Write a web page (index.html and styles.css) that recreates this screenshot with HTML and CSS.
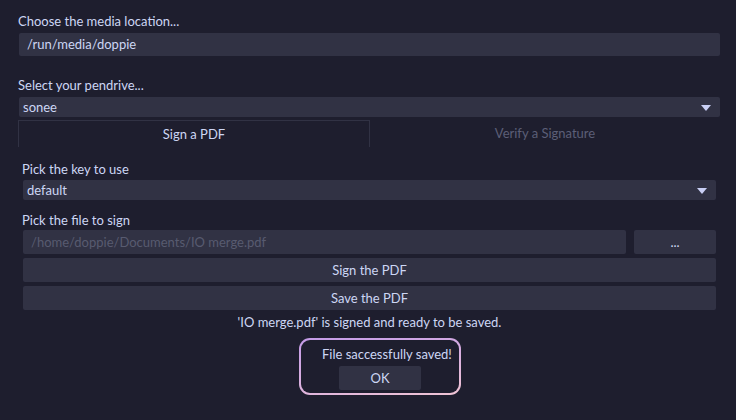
FILE: index.html
```html
<!DOCTYPE html>
<html>
<head>
<meta charset="utf-8">
<link rel="stylesheet" href="styles.css">
</head>
<body>
<div class="app">
  <div class="label l1">Choose the media location...</div>
  <div class="input path">/run/media/doppie</div>
  <div class="label l2">Select your pendrive...</div>
  <div class="select top">sonee<span class="arrow"></span></div>
  <div class="tabs">
    <div class="tab active">Sign a PDF</div>
    <div class="tab">Verify a Signature</div>
  </div>
  <div class="panel">
    <div class="label l3">Pick the key to use</div>
    <div class="select key">default<span class="arrow"></span></div>
    <div class="label l4">Pick the file to sign</div>
    <div class="filerow">
      <div class="input file">/home/doppie/Documents/IO merge.pdf</div>
      <div class="btn browse">...</div>
    </div>
    <div class="btn wide sign">Sign the PDF</div>
    <div class="btn wide save">Save the PDF</div>
    <div class="status">'IO merge.pdf' is signed and ready to be saved.</div>
    <div class="popup">
      <div class="popup-inner">
        <div class="msg">File saccessfully saved!</div>
        <div class="btn ok">OK</div>
      </div>
    </div>
  </div>
</div>
</body>
</html>
```
FILE: styles.css
```css
html, body {
  margin: 0;
  padding: 0;
  background: #1e1e2e;
  height: 100%;
}
body {
  font-family: "Lato", "Noto Sans", sans-serif;
  font-size: 13px;
  color: #cdd6f4;
}
.app {
  padding: 12px 16px 0 18px;
}
.label {
  height: 19px;
  line-height: 19px;
}
.input {
  background: #313244;
  border-radius: 2px;
  box-sizing: border-box;
}
.path {
  margin: 2px 0 0 1px;
  height: 23px;
  line-height: 23px;
  padding-left: 8px;
}
.l2 { margin-top: 20px; }
.select {
  position: relative;
  background: #313244;
  border-radius: 2px;
  height: 20px;
  line-height: 20px;
  padding-left: 4px;
}
.select.top { margin: 2px 0 0 1px; }
.arrow {
  position: absolute;
  right: 9px;
  top: 8px;
  width: 0;
  height: 0;
  border-left: 5px solid transparent;
  border-right: 5px solid transparent;
  border-top: 6px solid #c9cff5;
}
.tabs {
  display: flex;
  margin-top: 3px;
  height: 27px;
}
.tab {
  flex: 1;
  text-align: center;
  line-height: 27px;
  color: #5c5f77;
}
.tab.active {
  color: #cdd6f4;
  border: 1px solid #313244;
  border-bottom: none;
  line-height: 26px;
  flex: 0 0 350px;
}
.panel {
  padding: 0 4px 0 4px;
}
.l3 { margin-top: 13px; }
.select.key { margin-top: 1px; margin-left: 1px; }
.l4 { margin-top: 11px; }
.filerow {
  display: flex;
  gap: 8px;
  margin: 0 0 0 1px;
}
.file {
  flex: 1;
  height: 24px;
  line-height: 24px;
  padding-left: 8px;
  color: #585b70;
}
.btn {
  background: #313244;
  border-radius: 2px;
  text-align: center;
  height: 24px;
  line-height: 24px;
}
.browse {
  flex: 0 0 82px;
}
.wide {
  margin: 4px 0 0 1px;
}
.status {
  text-align: center;
  margin-top: 4px;
  line-height: 16px;
  margin-left: 1px;
}
.popup {
  margin: 8px 0 0 277px;
  width: 162px;
  box-sizing: border-box;
  padding: 2px;
  border-radius: 11px;
  background: linear-gradient(170deg, #c49be8 0%, #d8aee0 50%, #f0c4d4 100%);
}
.popup-inner {
  background: #1e1e2e;
  border-radius: 9px;
  height: 53px;
  box-sizing: border-box;
  padding-top: 5px;
}
.msg {
  padding-left: 21px;
  line-height: 18px;
}
.ok {
  width: 82px;
  margin: 3px 0 0 38px;
}
```
